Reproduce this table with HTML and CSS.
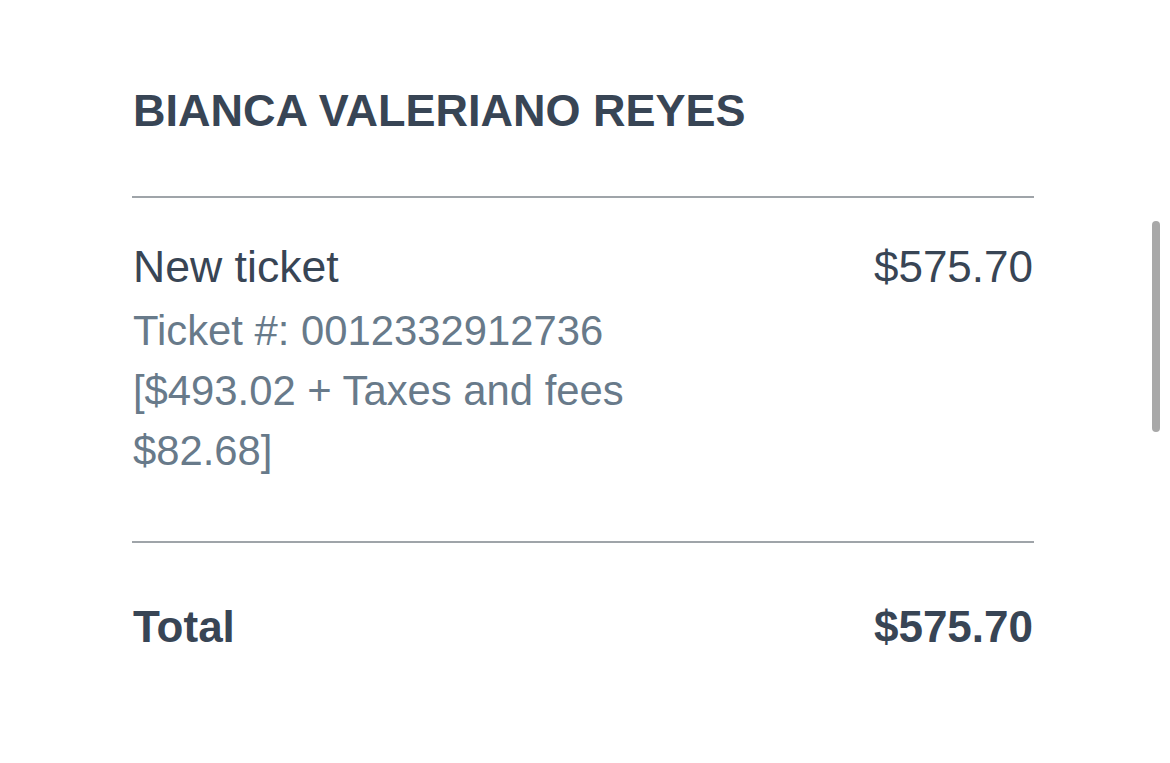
FILE: index.html
```html
<!DOCTYPE html>
<html lang="en">
<head>
<meta charset="utf-8">
<title>Receipt</title>
<link rel="stylesheet" href="styles.css">
</head>
<body>
<main class="receipt">
  <h1 class="passenger">BIANCA VALERIANO REYES</h1>
  <hr class="rule">
  <section class="item">
    <div class="item-info">
      <div class="item-title">New ticket</div>
      <div class="item-detail">Ticket #: 0012332912736</div>
      <div class="item-detail">[$493.02 + Taxes and fees $82.68]</div>
    </div>
    <div class="item-price">$575.70</div>
  </section>
  <hr class="rule rule-lower">
  <section class="total">
    <div class="total-label">Total</div>
    <div class="total-price">$575.70</div>
  </section>
</main>
<div class="scrollbar"></div>
</body>
</html>
```

FILE: styles.css
```css
html, body {
  margin: 0;
  padding: 0;
  background: #ffffff;
}

body {
  font-family: "Liberation Sans", Arial, sans-serif;
  color: #384555;
  width: 1170px;
  height: 763px;
  overflow: hidden;
}

.receipt {
  box-sizing: border-box;
  width: 1034px;
  padding: 85px 0 0 132px;
}

.passenger {
  margin: 0 0 59px 1px;
  font-size: 45px;
  line-height: 52px;
  font-weight: 700;
  color: #384555;
}

.rule {
  margin: 0;
  border: 0;
  height: 2px;
  background: #9fa4a9;
}

.item {
  display: flex;
  justify-content: space-between;
  align-items: flex-start;
  padding: 43px 1px 0 1px;
}

.item-info {
  width: 540px;
}

.item-title {
  font-size: 44.6px;
  line-height: 52px;
  margin-bottom: 8px;
}

.item-detail {
  font-size: 41.8px;
  line-height: 60px;
  color: #687a8a;
}

.item-price {
  font-size: 44px;
  line-height: 52px;
}

.rule-lower {
  margin-top: 60px;
}

.total {
  display: flex;
  justify-content: space-between;
  padding: 58px 1px 0 1px;
  font-size: 44px;
  line-height: 52px;
  font-weight: 700;
}

.scrollbar {
  position: absolute;
  left: 1152px;
  top: 221px;
  width: 8px;
  height: 211px;
  border-radius: 4px;
  background: #a8a8a8;
}
```
